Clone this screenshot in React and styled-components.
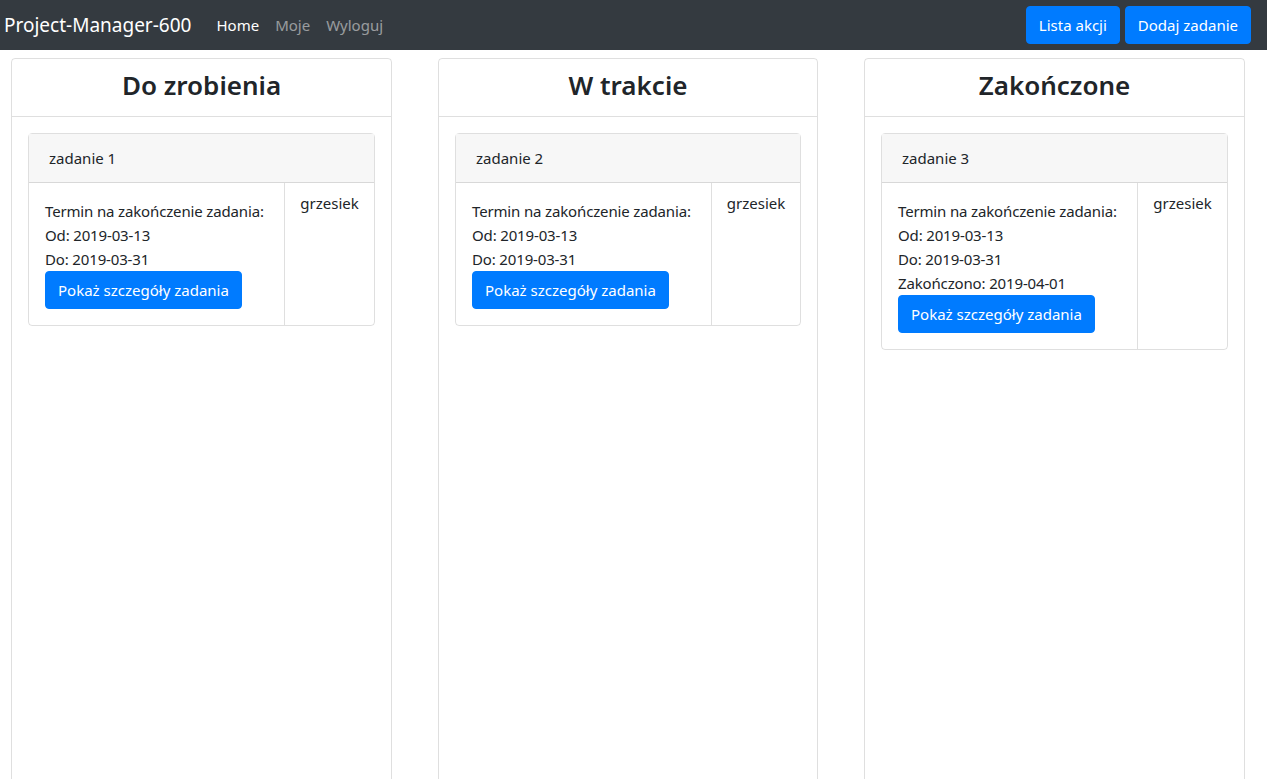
import React from 'react';
import styled, { createGlobalStyle } from 'styled-components';

const GlobalStyle = createGlobalStyle`
  * { box-sizing: border-box; }
  body {
    margin: 0;
    font-family: "Segoe UI", "Noto Sans", Roboto, sans-serif;
    font-size: 15px;
    line-height: 24px;
    color: #212529;
    background: #fff;
  }
`;

const Navbar = styled.nav`
  height: 50px;
  background-color: #343a40;
  display: flex;
  align-items: center;
  padding: 0 16px 0 4px;
`;

const Brand = styled.a`
  color: #fff;
  font-size: 19px;
  margin-right: 25px;
  text-decoration: none;
`;

const NavLinks = styled.div`
  display: flex;
  gap: 16px;
  flex: 1;
`;

const NavLink = styled.a`
  color: ${(props) => (props.active ? '#fff' : 'rgba(255, 255, 255, 0.5)')};
  font-size: 15px;
  text-decoration: none;
`;

const NavActions = styled.div`
  display: flex;
  gap: 5px;
`;

const Button = styled.button`
  font-family: inherit;
  font-size: 15px;
  line-height: 24px;
  color: #fff;
  background-color: #007bff;
  border: 1px solid #007bff;
  border-radius: 4px;
  padding: 6px 12px;
  cursor: pointer;
  height: 38px;
`;

const Board = styled.main`
  display: grid;
  grid-template-columns: 381px 380px 381px;
  column-gap: 46px;
  padding: 8px 0 0 11px;
`;

const Column = styled.section`
  border: 1px solid rgba(0, 0, 0, 0.125);
  border-radius: 4px;
  min-height: 760px;
`;

const ColumnHeader = styled.header`
  height: 58px;
  border-bottom: 1px solid rgba(0, 0, 0, 0.125);
  display: flex;
  align-items: center;
  justify-content: center;
  padding-bottom: 6px;
`;

const ColumnTitle = styled.h3`
  margin: 0;
  font-size: 26px;
  font-weight: 600;
  line-height: 32px;
`;

const ColumnBody = styled.div`
  padding: 16px;
`;

const TaskCard = styled.article`
  border: 1px solid rgba(0, 0, 0, 0.125);
  border-radius: 4px;
`;

const TaskHeader = styled.div`
  background-color: #f7f7f7;
  border-bottom: 1px solid rgba(0, 0, 0, 0.125);
  padding: 12px 20px;
  font-size: 15px;
`;

const TaskRow = styled.div`
  display: grid;
  grid-template-columns: 255px 1fr;
`;

const TaskInfo = styled.div`
  padding: 16px;
  font-size: 15px;
`;

const InfoLine = styled.div`
  white-space: nowrap;
  letter-spacing: -0.15px;
`;

const TaskOwner = styled.div`
  border-left: 1px solid rgba(0, 0, 0, 0.125);
  padding: 8px 0;
  text-align: center;
  font-size: 15px;
`;

const columns = [
  { title: 'Do zrobienia', task: 'zadanie 1' },
  { title: 'W trakcie', task: 'zadanie 2' },
  { title: 'Zakończone', task: 'zadanie 3', done: '2019-04-01' },
];

const App = () => {
  return (
    <>
      <GlobalStyle />
      <Navbar>
        <Brand href="#">Project-Manager-600</Brand>
        <NavLinks>
          <NavLink href="#" active>Home</NavLink>
          <NavLink href="#">Moje</NavLink>
          <NavLink href="#">Wyloguj</NavLink>
        </NavLinks>
        <NavActions>
          <Button>Lista akcji</Button>
          <Button>Dodaj zadanie</Button>
        </NavActions>
      </Navbar>
      <Board>
        {columns.map((col) => (
          <Column key={col.title}>
            <ColumnHeader>
              <ColumnTitle>{col.title}</ColumnTitle>
            </ColumnHeader>
            <ColumnBody>
              <TaskCard>
                <TaskHeader>{col.task}</TaskHeader>
                <TaskRow>
                  <TaskInfo>
                    <InfoLine>Termin na zakończenie zadania:</InfoLine>
                    <InfoLine>Od: 2019-03-13</InfoLine>
                    <InfoLine>Do: 2019-03-31</InfoLine>
                    {col.done && <InfoLine>Zakończono: {col.done}</InfoLine>}
                    <Button>Pokaż szczegóły zadania</Button>
                  </TaskInfo>
                  <TaskOwner>grzesiek</TaskOwner>
                </TaskRow>
              </TaskCard>
            </ColumnBody>
          </Column>
        ))}
      </Board>
    </>
  );
};

export default App;
